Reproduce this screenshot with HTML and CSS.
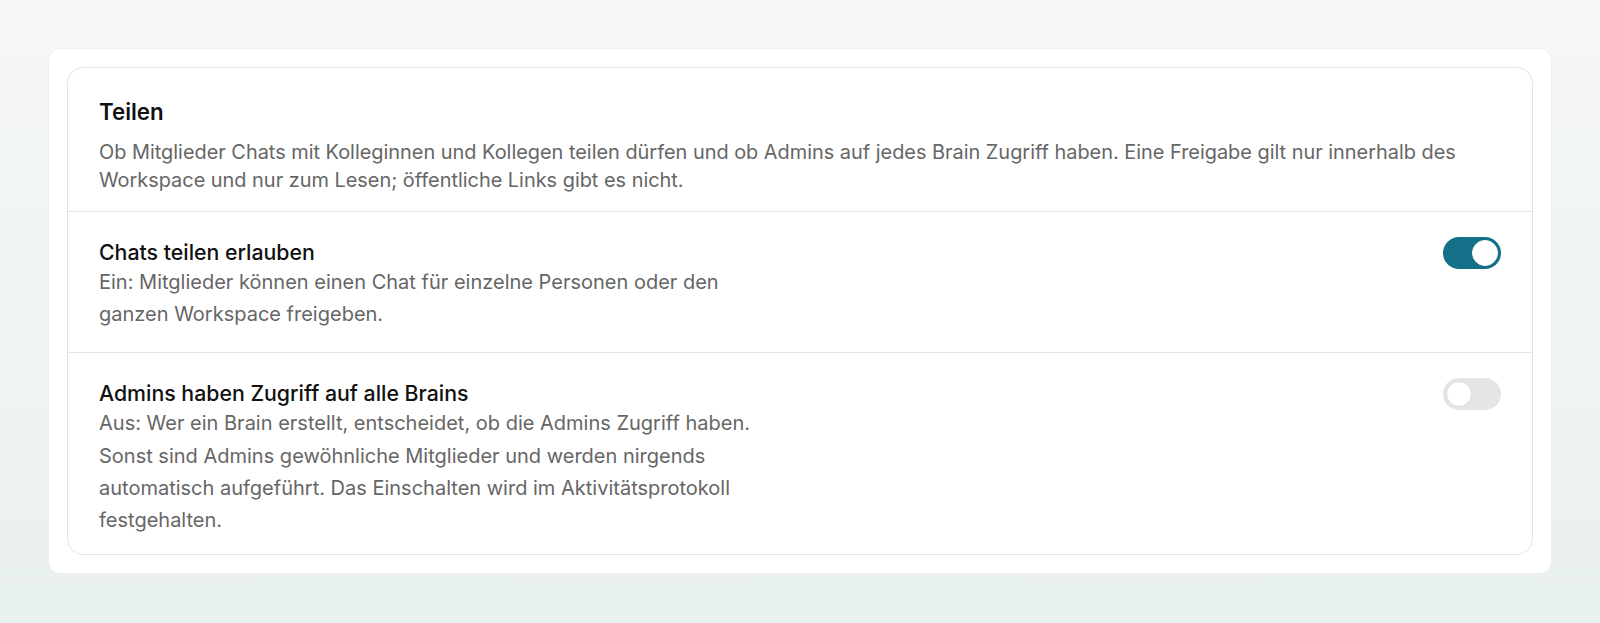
FILE: index.html
```html
<!DOCTYPE html>
<html lang="de">
<head>
<meta charset="utf-8">
<title>Teilen</title>
<link rel="stylesheet" href="styles.css">
</head>
<body>
<main class="page">
  <div class="outer">
    <section class="card">
      <header class="head">
        <h2 class="head-title">Teilen</h2>
        <p class="head-desc">Ob Mitglieder Chats mit Kolleginnen und Kollegen teilen dürfen und ob Admins auf jedes Brain Zugriff haben. Eine Freigabe gilt nur innerhalb des Workspace und nur zum Lesen; öffentliche Links gibt es nicht.</p>
      </header>
      <div class="row">
        <div class="row-text">
          <h3 class="row-title">Chats teilen erlauben</h3>
          <p class="row-desc">Ein: Mitglieder können einen Chat für einzelne Personen oder den ganzen Workspace freigeben.</p>
        </div>
        <button class="toggle on" type="button" aria-pressed="true"><span class="knob"></span></button>
      </div>
      <div class="row">
        <div class="row-text">
          <h3 class="row-title">Admins haben Zugriff auf alle Brains</h3>
          <p class="row-desc">Aus: Wer ein Brain erstellt, entscheidet, ob die Admins Zugriff haben. Sonst sind Admins gewöhnliche Mitglieder und werden nirgends automatisch aufgeführt. Das Einschalten wird im Aktivitätsprotokoll festgehalten.</p>
        </div>
        <button class="toggle" type="button" aria-pressed="false"><span class="knob"></span></button>
      </div>
    </section>
  </div>
</main>
</body>
</html>
```

FILE: styles.css
```css
* { box-sizing: border-box; }
html, body { margin: 0; padding: 0; }
body {
  font-family: Inter, "Noto Sans", sans-serif;
  background: linear-gradient(180deg, #f6f7f7 0%, #e9f0f0 100%);
  min-height: 623px;
  color: #111;
}
.page {
  padding: 48px;
}
.outer {
  background: #fff;
  border: 1px solid #eef0f0;
  border-radius: 12px;
  padding: 18px;
}
.card {
  border: 1px solid #e4e4e4;
  border-radius: 16px;
  overflow: hidden;
}
.head {
  padding: 29px 31px 17px;
  border-bottom: 1px solid #e4e4e4;
}
.head-title {
  margin: 0 0 11px;
  font-size: 22.3px;
  line-height: 30px;
  font-weight: 600;
  color: #111;
}
.head-desc {
  margin: 0;
  font-size: 19.9px;
  line-height: 28px;
  color: #666;
}
.row {
  display: flex;
  justify-content: space-between;
  align-items: flex-start;
  padding: 26px 31px 22px;
}
.row:last-child {
  padding-bottom: 18px;
}
.row + .row {
  border-top: 1px solid #e4e4e4;
}
.row-title {
  margin: 0;
  font-size: 21.3px;
  line-height: 28px;
  font-weight: 500;
  color: #111;
}
.row-desc {
  margin: 0;
  max-width: 675px;
  font-size: 20px;
  line-height: 32.2px;
  color: #666;
}
.toggle {
  flex: none;
  width: 58px;
  height: 32px;
  margin-top: -1px;
  border: none;
  border-radius: 16px;
  padding: 3px;
  background: #e5e5e5;
  display: flex;
  align-items: center;
  cursor: pointer;
}
.toggle .knob {
  width: 26px;
  height: 26px;
  border-radius: 50%;
  background: #fff;
  border: 1px solid #dcdcdc;
}
.toggle.on {
  background: #146f89;
  justify-content: flex-end;
}
.toggle.on .knob {
  border-color: #fff;
}
```
